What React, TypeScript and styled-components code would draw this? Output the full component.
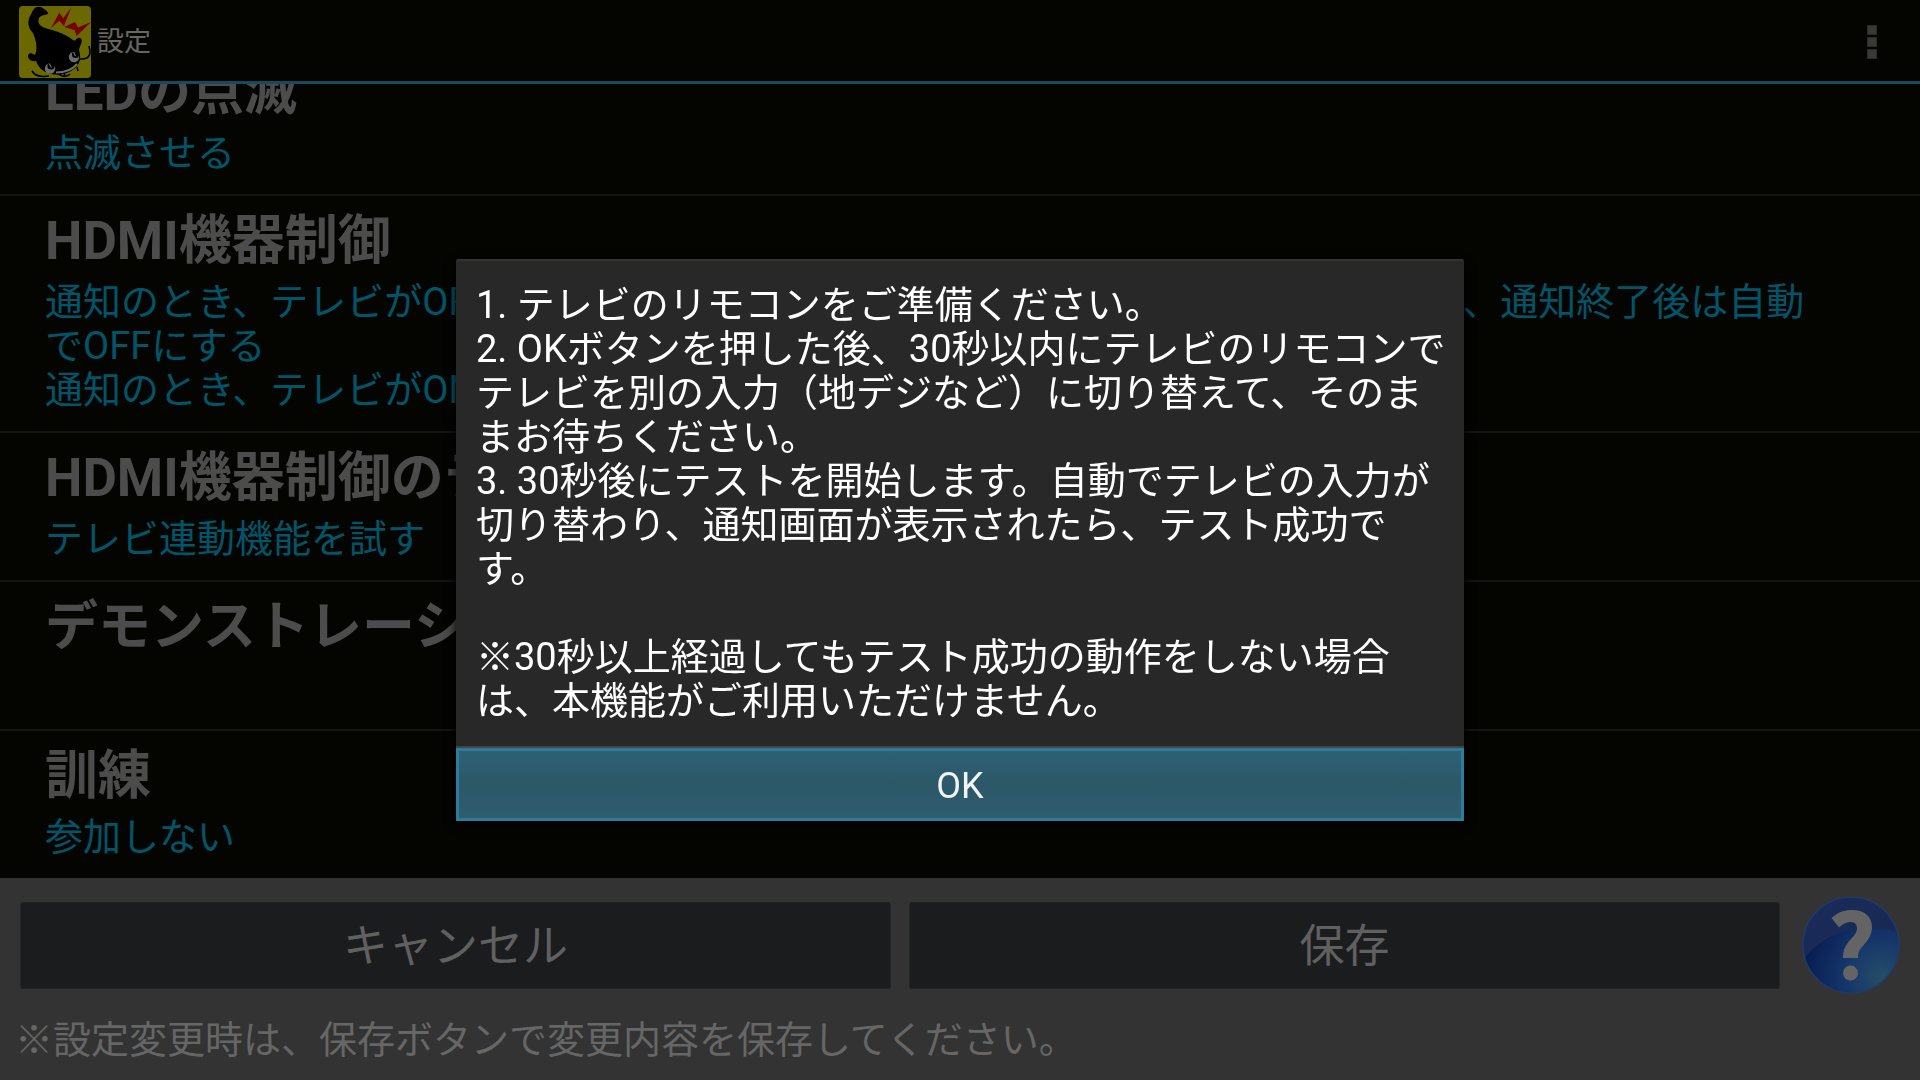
import React from "react";
import styled, { createGlobalStyle } from "styled-components";

const GlobalStyle = createGlobalStyle`
  * { box-sizing: border-box; }
  body {
    margin: 0;
    background: #040400;
    font-family: Roboto, "Noto Sans CJK JP", sans-serif;
  }
  h1, h2, p { margin: 0; font-weight: 400; }
  button { font-family: inherit; cursor: pointer; }
`;

const Screen = styled.div`
  display: flex;
  flex-direction: column;
  height: 100vh;
  overflow: hidden;
`;

const ActionBar = styled.header`
  display: flex;
  align-items: center;
  gap: 6px;
  flex: none;
  height: 84px;
  padding: 3px 43px 0 19px;
  border-bottom: 3px solid #174a60;
  background: #050500;
`;

const AppIcon = styled.svg`
  width: 72px;
  height: 72px;
`;

const BarTitle = styled.h1`
  flex: 1;
  font-size: 27px;
  line-height: 32px;
  color: #666;
`;

const MenuButton = styled.button`
  display: flex;
  flex-direction: column;
  gap: 2px;
  padding: 0;
  border: 0;
  background: none;
`;

const MenuDot = styled.span`
  width: 10px;
  height: 10px;
  background: #393939;
  border: 1px solid #2a2a29;
`;

const SettingsList = styled.main`
  display: flex;
  flex: 1;
  flex-direction: column;
  justify-content: flex-end;
  min-height: 0;
  overflow: hidden;
`;

const SettingRow = styled.section`
  display: flex;
  flex: none;
  flex-direction: column;
  gap: 7px;
  min-height: 149px;
  padding: 14px 96px 19px 45px;
  border-top: 2px solid #141412;
`;

const SettingTitle = styled.h2`
  font-size: 53px;
  font-weight: 700;
  line-height: 63px;
  color: #4c4c4c;
`;

const SettingSummary = styled.p`
  font-size: 38px;
  line-height: 44px;
  white-space: pre-line;
  color: #00556b;
`;

const Footer = styled.footer`
  display: flex;
  flex: none;
  flex-direction: column;
  gap: 24px;
  padding: 18px 0;
  background: #333;
`;

const FooterActions = styled.div`
  display: flex;
  align-items: center;
  gap: 18px;
  padding: 0 20px;
`;

const FooterButton = styled.button`
  flex: 1;
  height: 87px;
  padding: 3px 0 0;
  border: 1px solid #242526;
  border-top-color: #202123;
  border-radius: 3px;
  background: #1b1c1e;
  font-size: 45px;
  line-height: 54px;
  color: #606060;
`;

const HelpButton = styled.button`
  display: flex;
  padding: 0;
  border: 0;
  background: none;
`;

const HelpIcon = styled.svg`
  width: 102px;
  height: 98px;
`;

const Note = styled.p`
  padding: 0 15px;
  font-size: 38px;
  line-height: 44px;
  color: #666;
`;

const Overlay = styled.div`
  position: fixed;
  inset: 0;
  display: flex;
  align-items: center;
  justify-content: center;
`;

const Dialog = styled.div`
  width: 52.5%;
  border-radius: 3px 3px 0 0;
  background: #282828;
  box-shadow: 0 4px 12px #000;
`;

const DialogMessage = styled.p`
  padding: 22px 12px 23px 20px;
  border-top: 2px solid #333;
  border-bottom: 2px solid #454545;
  border-radius: 3px 3px 0 0;
  font-size: 38px;
  line-height: 44px;
  white-space: pre-line;
  color: #fff;
`;

const OkButton = styled.button`
  display: block;
  width: 100%;
  height: 73px;
  padding: 2px 0 0;
  border: 3px solid #2d7c9b;
  background: linear-gradient(#2e6074, #2c5868 50%, #2e5d70);
  font-size: 36px;
  line-height: 44px;
  color: #f0f4f5;
`;

const settings = [
  { title: "LEDの点滅", summary: "点滅させる" },
  {
    title: "HDMI機器制御",
    summary:
      "通知のとき、テレビがOFFの場合は 自動でONにして入力を切り替えて通知を表示し、通知終了後は自動でOFFにする\n通知のとき、テレビがONの場合は入力を切り替えて通知する",
  },
  { title: "HDMI機器制御のテスト", summary: "テレビ連動機能を試す" },
  { title: "デモンストレーション", summary: "" },
  { title: "訓練", summary: "参加しない" },
];

const message = `1. テレビのリモコンをご準備ください。
2. OKボタンを押した後、30秒以内にテレビのリモコンでテレビを別の入力（地デジなど）に切り替えて、そのままお待ちください。
3. 30秒後にテストを開始します。自動でテレビの入力が切り替わり、通知画面が表示されたら、テスト成功です。

※30秒以上経過してもテスト成功の動作をしない場合は、本機能がご利用いただけません。`;

function CatfishLogo() {
  return (
    <AppIcon viewBox="0 0 72 72" aria-hidden="true">
      <rect width="72" height="72" rx="4" fill="#6b6800" />
      <path
        d="M15 3C17 0 22 0 25 3C28 5 29 6 29 8C26 9 22 9 20 12C18 17 21 20 26 22C38 25 48 29 54 34C57 36 56 33 59 32C62 31 64 34 62 38C61 41 60 42 60 44C63 53 60 59 55 63C45 71 30 70 22 63C19 60 18 57 17 55C12 56 9 53 9 50C9 47 12 46 16 49C19 42 17 34 14 27C9 22 8 16 11 10C13 7 13 5 15 3Z"
        fill="#000"
      />
      <path
        d="M32 22L40.300 6.700L44.300 12.300L52.500 1L45 20L40.300 14.700Z"
        fill="#760000"
      />
      <path d="M45 21L56 16L59 21.500L72 16L57.700 30L55.500 24Z" fill="#760000" />
      <path
        d="M70 40Q74 54 61 53M13 65Q17 72 30 70M38 67Q46 73 51 68M45 66L46 71M58 61L59 65"
        fill="none"
        stroke="#000"
        strokeWidth="1.6"
      />
      <circle cx="55" cy="51" r="5.200" fill="#6c6c6c" />
      <circle cx="56.500" cy="48.500" r="3.600" fill="#000" />
      <circle cx="31" cy="62.500" r="5.200" fill="#6c6c6c" />
      <circle cx="32" cy="60" r="3.600" fill="#000" />
      <path d="M54.500 46L56.500 50M30 57.500L32.500 61.500" stroke="#6c6c6c" strokeWidth="1.2" />
      <path d="M37 66.500Q51 66.500 58 58" fill="none" stroke="#6c6c6c" strokeWidth="2" />
    </AppIcon>
  );
}

function HelpGlyph() {
  return (
    <HelpIcon viewBox="0 0 102 98" aria-hidden="true">
      <defs>
        <radialGradient id="helpBase" cx="0.82" cy="0.82" r="0.8">
          <stop offset="0" stopColor="#244d68" />
          <stop offset="0.5" stopColor="#15356a" />
          <stop offset="1" stopColor="#081d52" />
        </radialGradient>
        <linearGradient id="helpGloss" x1="0" y1="0" x2="1" y2="0.6">
          <stop offset="0" stopColor="#1a2b5c" />
          <stop offset="1" stopColor="#182a52" />
        </linearGradient>
      </defs>
      <circle cx="53" cy="49" r="48" fill="url(#helpBase)" />
      <path
        d="M7 62A48 48 0 0 1 53 1A48 48 0 0 1 99 35C64 28 28 34 7 62Z"
        fill="url(#helpGloss)"
      />
      <circle cx="53" cy="49" r="48" fill="none" stroke="#213a68" strokeWidth="1.5" />
      <path
        d="M33.500 22C40 16 46 14 54 14C67 14 74 21 74 31C74 40 69 45 65 50C61 54 60 57 60 62H45C45 54 47 50 52 44C57 39 59 36 59 32C59 24 48 24 41 31.500Z"
        fill="#646464"
      />
      <circle cx="52.500" cy="77" r="7.500" fill="#646464" />
    </HelpIcon>
  );
}

export default function App() {
  return (
    <>
      <GlobalStyle />
      <Screen>
        <ActionBar>
          <CatfishLogo />
          <BarTitle>設定</BarTitle>
          <MenuButton aria-label="メニュー">
            <MenuDot />
            <MenuDot />
            <MenuDot />
          </MenuButton>
        </ActionBar>
        <SettingsList>
          {settings.map((item) => (
            <SettingRow key={item.title}>
              <SettingTitle>{item.title}</SettingTitle>
              {item.summary && <SettingSummary>{item.summary}</SettingSummary>}
            </SettingRow>
          ))}
        </SettingsList>
        <Footer>
          <FooterActions>
            <FooterButton>キャンセル</FooterButton>
            <FooterButton>保存</FooterButton>
            <HelpButton aria-label="ヘルプ">
              <HelpGlyph />
            </HelpButton>
          </FooterActions>
          <Note>※設定変更時は、保存ボタンで変更内容を保存してください。</Note>
        </Footer>
      </Screen>
      <Overlay>
        <Dialog role="dialog" aria-modal="true" aria-describedby="dialog-message">
          <DialogMessage id="dialog-message">{message}</DialogMessage>
          <OkButton>OK</OkButton>
        </Dialog>
      </Overlay>
    </>
  );
}
